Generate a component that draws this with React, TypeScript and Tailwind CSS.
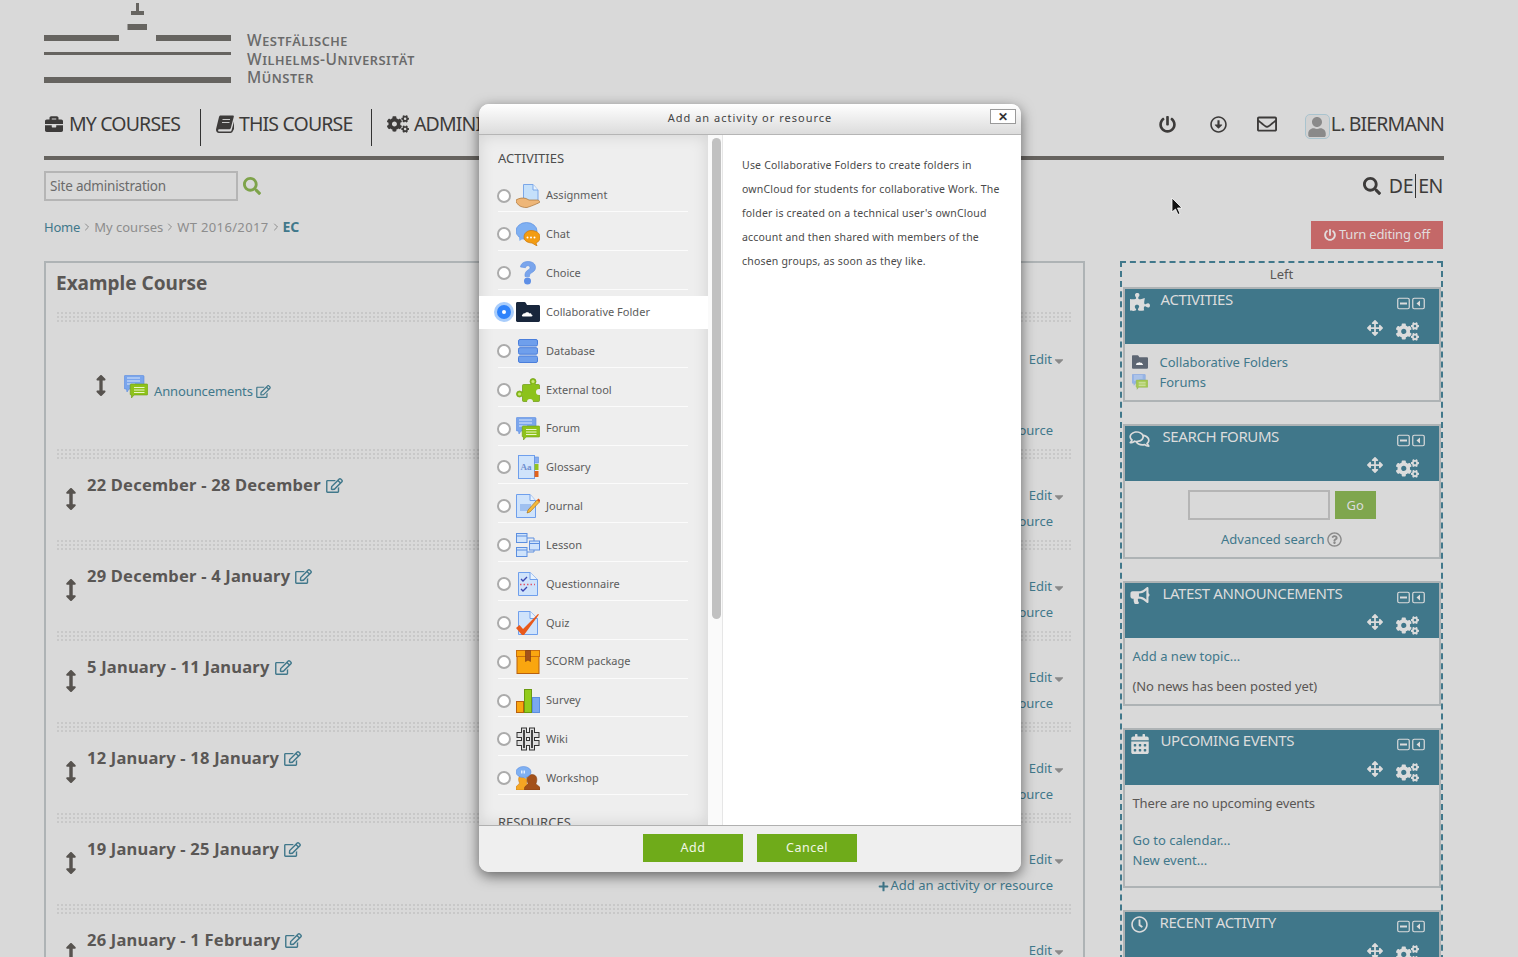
import React from 'react';
import { ChevronRight } from 'lucide-react';
import {
  FaArrowsAlt,
  FaArrowsAltV,
  FaBriefcase,
  FaBullhorn,
  FaCalendarAlt,
  FaCaretDown,
  FaCogs,
  FaPlus,
  FaPowerOff,
  FaPuzzlePiece,
  FaRegArrowAltCircleDown,
  FaRegClock,
  FaRegComments,
  FaRegEdit,
  FaRegEnvelope,
  FaRegQuestionCircle,
  FaSearch,
  FaUser,
} from 'react-icons/fa';

function Logo() {
  return (
    <svg width="187" height="84" viewBox="0 0 187 84" fill="#666460" className="shrink-0">
      <rect x="92" y="3" width="3" height="8" />
      <rect x="87" y="11" width="13" height="4" />
      <rect x="83.5" y="24" width="19.5" height="6" />
      <rect x="0" y="35" width="75" height="6" />
      <rect x="112" y="35" width="75" height="6" />
      <rect x="0" y="52" width="187" height="3" />
      <rect x="0" y="77" width="187" height="6" />
    </svg>
  );
}

function BookIcon() {
  return (
    <svg width="18" height="18" viewBox="0 0 18 18" fill="currentColor">
      <path d="M4.500.5H17c.8 0 1 .6.800 1.300L14.800 13c-.3 1-.9 1.300-1.800 1.300H3.500c-1.800 0-1.800 2.200-.2 2.200h11c.6 0 1-.3 1.200-.9L18 6.500V14l-1.500 2.800c-.3.700-1 1.200-1.800 1.200H3c-2.300 0-3.500-2-2.800-4.500L3 2c.2-.9.700-1.500 1.500-1.500z" />
      <path d="M6.500 4.500h7.500M6 7.500h7.500" stroke="#d9d9d9" strokeWidth=".9" />
    </svg>
  );
}

function CloudFolder({ size = 24, fill = '#18263c' }: { size?: number; fill?: string }) {
  return (
    <svg width={size} height={size} viewBox="0 0 24 24" className="shrink-0">
      <path d="M0 3.500C0 2.700.6 2 1.400 2h7c.6 0 1 .3 1.300.8L11 5h11.600c.8 0 1.400.6 1.400 1.400v14.200c0 .8-.6 1.400-1.400 1.400H1.400C.6 22 0 21.400 0 20.600z" fill={fill} />
      <path d="M7 16.500c-1.400 0-1.600-2 0-2.200.2-1 1.400-1.400 2-.8.6-1.600 3.800-1.600 4.400 0 .8-.5 2 0 2 1 1.700.2 1.400 2-.2 2z" fill="#fff" />
    </svg>
  );
}

function ForumIcon({ size = 24 }: { size?: number }) {
  return (
    <svg width={size} height={size} viewBox="0 0 24 24" className="shrink-0">
      <path d="M1 .5h18c.6 0 1 .4 1 1V14H5l-2 3-.5-3H1c-.4 0-.8-.4-.8-1V1.500C.2 1 .5.500 1 .5z" fill="#7aa5ec" stroke="#5b8be0" strokeWidth=".6" />
      <path d="M3 3h13M3 6h13M3 9h8" stroke="#dbe8fb" strokeWidth="1" />
      <path d="M7 9h16c.4 0 .8.4.8.8v9.400c0 .5-.4.8-.8.8H10l-2.500 3V20H7c-.4 0-.8-.3-.8-.8V9.800c0-.4.400-.8.800-.8z" fill="#8ec21a" stroke="#6e9d12" strokeWidth=".6" />
      <path d="M10 12.500h10.500M10 15h10.500M10 17.500h10.500" stroke="#eaf6c9" strokeWidth="1" />
    </svg>
  );
}

function ActivityIcon({ name }: { name: string }) {
  switch (name) {
    case 'Assignment':
      return (
        <svg width="24" height="24" viewBox="0 0 24 24">
          <path d="M7.500.5H17l5 5.500V19H7.500z" fill="#c5e0fa" stroke="#7ba7e8" />
          <path d="M17 .5V6h5" fill="#eaf4fe" stroke="#7ba7e8" />
          <path d="M0 16c3-2 7-2.500 10-1.500l3 1.500h8.500c2 .5 2.500 1.500 2 2.500-3 1.500-9 4-12.500 5-3 .3-7-1-8.500-2.500L0 18z" fill="#eeb678" stroke="#a97336" strokeWidth=".7" />
        </svg>
      );
    case 'Chat':
      return (
        <svg width="24" height="24" viewBox="0 0 24 24">
          <ellipse cx="10.500" cy="9" rx="10.500" ry="8.500" fill="#7fb0f2" stroke="#5c8fe0" strokeWidth=".7" />
          <path d="M3 15l.5 4L8 16z" fill="#7fb0f2" />
          <path d="M15 8.500c5 0 9 2.500 9 6.500 0 3-1.500 5-4 6l1 3-5-3c-5-.2-8-2.500-8-6 0-4 3.500-6.500 7-6.500z" fill="#f39c12" stroke="#c9770c" strokeWidth=".7" />
          <circle cx="11.500" cy="15.500" r="1" fill="#fff" />
          <circle cx="15" cy="15.500" r="1" fill="#fff" />
          <circle cx="18.500" cy="15.500" r="1" fill="#fff" />
        </svg>
      );
    case 'Choice':
      return (
        <svg width="24" height="24" viewBox="0 0 24 24">
          <path d="M4.500 6C5 2 8.500.500 12 .500c4.500 0 7.500 2.300 7.500 6 0 3-2.200 4.300-4.200 5.500-1.300.8-1.800 1.500-1.800 3.500H9c-.3-3 .5-5 3-6.500 1.300-.8 2-1.300 2-2.300 0-1.400-1-2-2.200-2-1.300 0-2 .8-2.300 2z" fill="#7aa5ec" stroke="#5c8fe0" strokeWidth=".6" />
          <circle cx="11.500" cy="20" r="3.500" fill="#5e8fe6" />
        </svg>
      );
    case 'Collaborative Folder':
      return <CloudFolder />;
    case 'Database':
      return (
        <svg width="24" height="24" viewBox="0 0 24 24">
          <rect x="2.500" y=".5" width="19" height="6.500" rx="1.500" fill="#6f9fec" stroke="#4a7edb" />
          <rect x="2.500" y="8.700" width="19" height="6.500" rx="1.500" fill="#6f9fec" stroke="#4a7edb" />
          <rect x="2.500" y="17" width="19" height="6.500" rx="1.500" fill="#6f9fec" stroke="#4a7edb" />
        </svg>
      );
    case 'External tool':
      return (
        <svg width="24" height="24" viewBox="0 0 24 24">
          <g fill="#8cc21b" stroke="#6b9a10" strokeWidth=".7">
            <circle cx="17" cy="3.500" r="3" />
            <circle cx="3.500" cy="16" r="3" />
            <rect x="6.500" y="6.500" width="17" height="17" rx="1" />
          </g>
          <rect x="15.500" y="5.500" width="3.500" height="3" fill="#8cc21b" />
          <rect x="5.500" y="14.500" width="3" height="3.500" fill="#8cc21b" />
          <circle cx="17" cy="3.500" r="1.500" fill="#c9e67c" />
          <circle cx="3.500" cy="16" r="1.500" fill="#c9e67c" />
          <circle cx="23" cy="14" r="3" fill="#eee" />
          <circle cx="14" cy="24" r="3" fill="#eee" />
        </svg>
      );
    case 'Forum':
      return <ForumIcon />;
    case 'Glossary':
      return (
        <svg width="24" height="24" viewBox="0 0 24 24">
          <rect x="2.500" y=".5" width="16" height="23" fill="#cfe3fb" stroke="#6f9fec" />
          <rect x="18.500" y="2" width="4" height="6" fill="#88aef0" stroke="#5c8fe0" strokeWidth=".6" />
          <rect x="18.500" y="9" width="4" height="6" fill="#93c31d" />
          <rect x="18.500" y="16" width="4" height="6" fill="#e1621d" />
          <text x="4.500" y="15" fontSize="9" fontWeight="700" fontFamily="'Liberation Serif',serif" fill="#6f8fcf">Aa</text>
        </svg>
      );
    case 'Journal':
      return (
        <svg width="24" height="24" viewBox="0 0 24 24">
          <path d="M.5.5H14l5.500 6v17H.5z" fill="#cfe3fb" stroke="#6f9fec" />
          <path d="M14 .5v6h5.500" fill="#e8f2fd" stroke="#6f9fec" />
          <rect x="4" y="10" width="11" height="7" fill="#9fc0f0" />
          <path d="M12 16l9-10 2.500 2-9.500 10-3 1z" fill="#f5b93c" stroke="#a06a10" strokeWidth=".6" />
          <path d="M21 6l1.500-1.500 2 2-1 1.500z" fill="#e25d1b" />
        </svg>
      );
    case 'Lesson':
      return (
        <svg width="24" height="24" viewBox="0 0 24 24" fill="#cfe3fb" stroke="#5c8fe0">
          <rect x=".5" y=".5" width="10.500" height="9" />
          <rect x=".5" y="14.500" width="10.500" height="9" />
          <rect x="13.500" y="8" width="10" height="9" />
          <path d="M.5 3h10.500M.5 17h10.500M13.500 10.500h10" fill="none" />
          <path d="M11 5h7v3M11 19h7v-2" fill="none" />
        </svg>
      );
    case 'Questionnaire':
      return (
        <svg width="24" height="24" viewBox="0 0 24 24">
          <path d="M2.500.5H14l7.500 7v16h-19z" fill="#cfe3fb" stroke="#6f9fec" />
          <path d="M14 .5v7h7.500" fill="#e8f2fd" stroke="#6f9fec" />
          <path d="M5 7l2 2 4-4M5 17l2 2 4-4" fill="none" stroke="#3b46b0" strokeWidth="1.300" />
          <path d="M4 12.500h15" stroke="#e2566b" strokeWidth="1.300" strokeDasharray="1.500 2" />
        </svg>
      );
    case 'Quiz':
      return (
        <svg width="24" height="24" viewBox="0 0 24 24">
          <path d="M2.500.5H14l7.500 7v16h-19z" fill="#cfe3fb" stroke="#6f9fec" />
          <path d="M14 .5v7h7.500" fill="#e8f2fd" stroke="#6f9fec" />
          <path d="M0 17l3.500-3 3.500 4L22 3l1 .5L8 24H6z" fill="#e8591b" />
        </svg>
      );
    case 'SCORM package':
      return (
        <svg width="24" height="24" viewBox="0 0 24 24">
          <rect x="1" y="6" width="22" height="17.500" fill="#faa60f" stroke="#b8600f" />
          <rect x=".5" y=".5" width="23" height="6" fill="#faa60f" stroke="#c96f0f" />
          <path d="M9.500.5h5v11l-2.500-1.500-2.500 1.500z" fill="#a3511a" stroke="#7a3b10" strokeWidth=".6" />
        </svg>
      );
    case 'Survey':
      return (
        <svg width="24" height="24" viewBox="0 0 24 24">
          <rect x=".5" y="12.500" width="7" height="11" fill="#faa60f" stroke="#b8600f" />
          <rect x="8.500" y=".5" width="7" height="23" fill="#92cc1b" stroke="#6b9a10" />
          <rect x="16.500" y="8.500" width="7" height="15" fill="#7aa8f0" stroke="#5c8fe0" />
        </svg>
      );
    case 'Wiki':
      return (
        <svg width="24" height="24" viewBox="0 0 24 24" fill="none">
          <path d="M8 .5v23M16 .5v23M.5 8h23M.5 16h23" stroke="#333" strokeWidth="6" />
          <path d="M8 1.500v21M16 1.500v21M1.500 8h21M1.500 16h21" stroke="#dedede" strokeWidth="4" />
          <path d="M8 3v18M16 3v18" stroke="#444" strokeWidth="2" />
        </svg>
      );
    case 'Workshop':
      return (
        <svg width="24" height="24" viewBox="0 0 24 24">
          <path d="M0 24v-2.500c0-2 3-2.500 3.500-4.500C2 14 2 9 7 9s5 5 3.500 8c.5 2 3.500 2.500 3.500 4.500V24z" fill="#f5a623" stroke="#c0700f" strokeWidth=".5" />
          <path d="M8.500 24v-2c0-2 3-2.500 3.500-4.500-1.500-3-1.500-9 4-9s5.500 6 4 9c.5 2 4 2.500 4 4.500v2z" fill="#a3511a" stroke="#7a3b10" strokeWidth=".5" />
          <ellipse cx="7.500" cy="6" rx="7.500" ry="5.500" fill="#7fb0f2" stroke="#5c8fe0" strokeWidth=".6" />
          <path d="M7.500 11l3 2.500-.5-3z" fill="#7fb0f2" />
          <path d="M5.500 4.500v3M7 4.500v3M8.500 4.500v3" stroke="#fff" strokeWidth=".8" />
        </svg>
      );
    default:
      return null;
  }
}

const activities = [
  'Assignment',
  'Chat',
  'Choice',
  'Collaborative Folder',
  'Database',
  'External tool',
  'Forum',
  'Glossary',
  'Journal',
  'Lesson',
  'Questionnaire',
  'Quiz',
  'SCORM package',
  'Survey',
  'Wiki',
  'Workshop',
];

function ActivityRow({ name }: { name: string }) {
  const selected = name === 'Collaborative Folder';
  return (
    <div className="h-[38.85px] pt-[6px]">
      <div className={`h-full pl-[19px] ${selected ? 'bg-white' : ''}`}>
        <div className={`flex h-full w-[190px] items-center border-b ${selected ? 'border-white' : 'border-[#fbfbfb]'}`}>
          {selected ? (
            <span className="-ml-px flex h-[14px] w-[14px] shrink-0 items-center justify-center rounded-full bg-[#2f83fb] shadow-[0_0_0_3px_#a9cdfb]">
              <span className="h-[4px] w-[4px] rounded-full bg-white" />
            </span>
          ) : (
            <span className="-ml-px h-[14px] w-[14px] shrink-0 rounded-full border-2 border-[#ababab] bg-white" />
          )}
          <span className="ml-[5px] flex w-[24px] shrink-0 items-center">
            <ActivityIcon name={name} />
          </span>
          <span className="ml-[6px] text-[11px] tracking-[0.02px] text-[#5c5c5c]">{name}</span>
        </div>
      </div>
    </div>
  );
}

function Modal() {
  return (
    <div className="absolute left-[479px] top-[104px] flex h-[768px] w-[542px] flex-col overflow-hidden rounded-[10px] bg-white shadow-[0_4px_14px_rgba(0,0,0,0.55)]">
      <div className="relative flex h-[31px] shrink-0 items-center justify-center border-b border-[#b5b5b5] bg-gradient-to-b from-white to-[#dcdcdc] pb-[2px] text-[11px] tracking-[1px] text-[#444]">
        Add an activity or resource
        <span className="absolute right-[5px] top-[5px] flex h-[15px] w-[26px] items-center justify-center border border-[#9a9a9a] bg-white text-[12px] font-bold leading-none text-[#333]">
          ✕
        </span>
      </div>
      <div className="flex min-h-0 flex-1">
        <div className="w-[229px] shrink-0 overflow-hidden bg-[#eeeeee] shadow-[inset_0_0_16px_rgba(0,0,0,0.12)]">
          <div className="pl-[19px] pt-[14px] text-[13px] leading-[18px] text-[#4d4d4d]">ACTIVITIES</div>
          <div className="mt-[6.650px]">
            {activities.map((a) => (
              <ActivityRow key={a} name={a} />
            ))}
          </div>
          <div className="pl-[19px] pt-[18px] text-[13px] leading-[18px] text-[#4d4d4d]">RESOURCES</div>
        </div>
        <div className="w-[15px] shrink-0 border-r border-[#e6e6e6] bg-[#fafafa] pl-[4px] pt-[3px]">
          <div className="h-[481px] w-[9px] rounded-[5px] bg-[#c1c1c1]" />
        </div>
        <div className="flex-1 pl-[19px] pt-[18px] text-[10.500px] leading-[24px] tracking-[0.2px] text-[#4a4a4a]">
          Use Collaborative Folders to create folders in
          <br />
          ownCloud for students for collaborative Work. The
          <br />
          folder is created on a technical user's ownCloud
          <br />
          account and then shared with members of the
          <br />
          chosen groups, as soon as they like.
        </div>
      </div>
      <div className="flex h-[47px] shrink-0 items-start justify-center gap-[14px] border-t border-[#b0b0b0] bg-[#efefef] pt-[8px]">
        <button className="h-[28px] w-[100px] bg-[#6fab1a] text-[12.500px] tracking-[0.5px] text-[#f2f7e6]">Add</button>
        <button className="h-[28px] w-[100px] bg-[#6fab1a] text-[12.500px] tracking-[0.5px] text-[#f2f7e6]">Cancel</button>
      </div>
    </div>
  );
}

function Stripe() {
  return (
    <div className="h-[10px] bg-[radial-gradient(circle,#c8c8c8_1.2px,transparent_1.4px)] bg-[length:4px_4px] bg-[position:0_-1px]" />
  );
}

function EditLink() {
  return (
    <span className="mr-[-11px]">
      Edit
      <FaCaretDown className="ml-[2px] inline h-[14px] w-[10px] text-[#8a8a8a]" />
    </span>
  );
}

function AddLink() {
  return (
    <div className="whitespace-nowrap">
      <FaPlus className="mr-[2px] inline h-[11px] w-[11px]" />
      Add an activity or resource
    </div>
  );
}

function SectionRow({ title }: { title: string }) {
  return (
    <div className="h-[91px]">
      <Stripe />
      <div className="flex h-[81px]">
        <div className="w-[31px] shrink-0 pl-[8px] pt-[29px] text-[#57534f]">
          <FaArrowsAltV className="h-[22px] w-[14px]" />
        </div>
        <div className="flex-1 pt-[14px]">
          <div className="flex items-center gap-[5px] text-[16.500px] font-bold leading-[24px] tracking-[0.22px] text-[#5a5755]">
            {title}
            <FaRegEdit className="h-[15px] w-[17px] text-[#41788b]" />
          </div>
        </div>
        <div className="w-[200px] pr-[20px] pt-[26px] text-right text-[13px] leading-[20px] text-[#41788b]">
          <div>
            <EditLink />
          </div>
          <div className="mt-[6px]">
            <AddLink />
          </div>
        </div>
      </div>
    </div>
  );
}

function CourseBox() {
  return (
    <div className="h-[720px] w-[1041px] shrink-0 border-2 border-b-0 border-[#aeb3b5] px-[10px]">
      <h2 className="pt-[6px] text-[19px] font-bold leading-[28px] text-[#5a5755]">Example Course</h2>
      <div className="mt-[15px] h-[137px]">
        <Stripe />
        <div className="flex h-[127px]">
          <div className="h-full w-[68px] shrink-0 pl-[38px] pt-[53px] text-[#57534f]">
            <FaArrowsAltV className="h-[21px] w-[14px]" />
          </div>
          <div className="flex flex-1 items-start pt-[53px]">
            <ForumIcon />
            <span className="ml-[6px] mt-[6px] flex items-center gap-[3px] text-[13px] leading-[20px] tracking-[-0.12px] text-[#41788b]">
              Announcements
              <FaRegEdit className="h-[13px] w-[15px]" />
            </span>
          </div>
          <div className="w-[200px] pr-[20px] pt-[27px] text-right text-[13px] leading-[20px] text-[#41788b]">
            <div>
              <EditLink />
            </div>
            <div className="mt-[51px]">
              <AddLink />
            </div>
          </div>
        </div>
      </div>
      <SectionRow title="22 December - 28 December" />
      <SectionRow title="29 December - 4 January" />
      <SectionRow title="5 January - 11 January" />
      <SectionRow title="12 January - 18 January" />
      <SectionRow title="19 January - 25 January" />
      <SectionRow title="26 January - 1 February" />
    </div>
  );
}

function BlockControls() {
  return (
    <div className="flex gap-[2px]">
      <svg width="13" height="13" viewBox="0 0 13 13" fill="none">
        <rect x=".75" y="1.250" width="11.500" height="10.500" rx="1.500" stroke="currentColor" strokeWidth="1.200" />
        <path d="M3 6.500h7" stroke="currentColor" strokeWidth="2" />
      </svg>
      <svg width="13" height="13" viewBox="0 0 13 13" fill="none">
        <rect x=".75" y="1.250" width="11.500" height="10.500" rx="1.500" stroke="currentColor" strokeWidth="1.200" />
        <path d="M8 3.500v6l-3.500-3z" fill="currentColor" />
      </svg>
    </div>
  );
}

interface BlockProps {
  icon: React.ReactNode;
  title: string;
  height: string;
  titleIndent: string;
  children?: React.ReactNode;
}

function Block({ icon, title, height, titleIndent, children }: BlockProps) {
  return (
    <div className={`mb-[22px] ml-[0.500px] border-2 border-[#aeb3b5] ${height}`}>
      <div className="flex h-[55px] bg-[#40778a] pl-[4px] pr-[14px] text-[#dcdcdc]">
        <div className="flex flex-1 items-start">
          <span className="flex w-[22px] justify-center pt-[4px]">{icon}</span>
          <span className={`-mt-[2px] whitespace-nowrap text-[15px] uppercase leading-[24px] tracking-[-0.4px] ${titleIndent}`}>{title}</span>
        </div>
        <div className="flex w-[66px] flex-col items-end pt-[8px]">
          <BlockControls />
          <div className="mt-[10px] flex items-start gap-[13px] pr-[6px]">
            <FaArrowsAlt className="h-[16px] w-[16px]" />
            <FaCogs className="mt-[2px] h-[19px] w-[23px]" />
          </div>
        </div>
      </div>
      {children}
    </div>
  );
}

function Sidebar() {
  return (
    <div className="mr-px h-[720px] w-[323px] shrink-0 border-x-2 border-t-2 border-dashed border-[#41788b] text-[13px] leading-[20px]">
      <div className="h-[24px] pt-[1px] text-center text-[#5a5755]">Left</div>
      <Block icon={<FaPuzzlePiece className="h-[18px] w-[20px]" />} title="Activities" height="h-[115px]" titleIndent="ml-[10px]">
        <div className="px-[7px] pt-[8px] text-[#41788b]">
          <div className="flex items-center gap-[12px]">
            <span className="opacity-80">
              <CloudFolder size={16} fill="#3f4a5a" />
            </span>
            Collaborative Folders
          </div>
          <div className="flex items-center gap-[12px]">
            <span className="opacity-70">
              <ForumIcon size={16} />
            </span>
            Forums
          </div>
        </div>
      </Block>
      <Block icon={<FaRegComments className="h-[18px] w-[21px]" />} title="Search forums" height="h-[135px]" titleIndent="ml-[12px]">
        <div className="flex flex-col items-center pt-[9px]">
          <div className="flex items-center gap-[5px]">
            <div className="h-[30px] w-[142px] border-2 border-[#b5b5b5]" />
            <div className="flex h-[28px] w-[41px] items-center justify-center bg-[#7fa64d] text-[#dcdcdc]">Go</div>
          </div>
          <div className="mt-[9px] flex items-center gap-[3px] text-[#41788b]">
            Advanced search
            <FaRegQuestionCircle className="h-[15px] w-[15px] text-[#8a8a8a]" />
          </div>
        </div>
      </Block>
      <Block icon={<FaBullhorn className="h-[17px] w-[20px]" />} title="Latest announcements" height="h-[125px]" titleIndent="ml-[12px]">
        <div className="px-[8px] pt-[8px]">
          <div className="text-[#41788b]">Add a new topic...</div>
          <div className="mt-[10px] tracking-[-0.08px] text-[#5a5755]">(No news has been posted yet)</div>
        </div>
      </Block>
      <Block icon={<FaCalendarAlt className="h-[20px] w-[18px]" />} title="Upcoming events" height="h-[160px]" titleIndent="ml-[10px]">
        <div className="px-[8px] pt-[8px]">
          <div className="tracking-[-0.12px] text-[#5a5755]">There are no upcoming events</div>
          <div className="mt-[17px] text-[#41788b]">Go to calendar...</div>
          <div className="text-[#41788b]">New event...</div>
        </div>
      </Block>
      <Block icon={<FaRegClock className="h-[17px] w-[17px]" />} title="Recent activity" height="h-[115px]" titleIndent="ml-[9px]" />
    </div>
  );
}

function Cursor() {
  return (
    <svg className="absolute left-[1171px] top-[197px]" width="12" height="19" viewBox="0 0 12 19">
      <path d="M1 1v14l3.500-3 2.500 5.500 2-1L6.500 11H11z" fill="#111" stroke="#fff" strokeWidth=".8" />
    </svg>
  );
}

export default function App() {
  return (
    <div className="relative h-[957px] overflow-hidden bg-[#d9d9d9] pl-[44px] [font-family:'Noto_Sans',sans-serif]">
      <div className="w-[1400px]">
        <div className="flex h-[109px] items-start">
          <Logo />
          <div className="ml-[16px] mt-[31px] text-[15.500px] font-medium leading-[18.500px] tracking-[0.55px] text-[#6a6a6a] [font-variant:small-caps]">
            <div>Westfälische</div>
            <div>Wilhelms-Universität</div>
            <div>Münster</div>
          </div>
        </div>
        <div className="flex h-[51px] justify-between border-b-4 border-[#66635f] text-[19.500px] tracking-[-0.85px] text-[#3d3b3a]">
          <div className="flex h-[37px]">
            <div className="flex w-[157px] items-center gap-[5px] border-r border-[#333] pb-[7px]">
              <FaBriefcase className="h-[18px] w-[20px]" /> MY COURSES
            </div>
            <div className="flex w-[171px] items-center gap-[5px] border-r border-[#333] pb-[7px] pl-[15px]">
              <BookIcon /> THIS COURSE
            </div>
            <div className="flex items-center gap-[5px] pb-[7px] pl-[15px]">
              <FaCogs className="h-[20px] w-[22px]" /> ADMINISTRATION
            </div>
          </div>
          <div className="flex h-[30px] items-center">
            <FaPowerOff className="h-[17px] w-[17px]" />
            <FaRegArrowAltCircleDown className="ml-[34px] h-[17px] w-[17px]" />
            <FaRegEnvelope className="ml-[30px] h-[20px] w-[20px]" />
            <span className="ml-[28px] mt-[5px] flex h-[25px] w-[25px] items-center justify-center rounded-[5px] border border-[#a9c4cf] bg-[#d2d2d2]">
              <FaUser className="h-[20px] w-[20px] text-[#8a8a8a]" />
            </span>
            <span className="ml-px">L. BIERMANN</span>
          </div>
        </div>
        <div className="flex h-[101px] justify-between">
          <div className="pt-[11px]">
            <div className="flex items-center">
              <div className="flex h-[30px] w-[194px] items-center border-2 border-[#b5b5b5] pl-[4px] text-[13.500px] tracking-[-0.2px] text-[#6b6b6b]">
                Site administration
              </div>
              <FaSearch className="ml-[5px] h-[18px] w-[18px] text-[#7ea34a]" />
            </div>
            <div className="mt-[16px] flex items-center gap-[4px] text-[13px] leading-[20px] text-[#8d8d8d]">
              <span className="tracking-[-0.2px] text-[#41788b]">Home</span>
              <ChevronRight className="mx-[-3px] h-[12px] w-[12px]" />
              <span>My courses</span>
              <ChevronRight className="mx-[-3px] h-[12px] w-[12px]" />
              <span className="tracking-[0.35px]">WT 2016/2017</span>
              <ChevronRight className="mx-[-3px] h-[12px] w-[12px]" />
              <span className="text-[14px] font-bold text-[#41788b]">EC</span>
            </div>
          </div>
          <div className="flex flex-col items-end pr-px pt-[12px]">
            <div className="flex h-[28px] items-center text-[19.500px] tracking-[-0.4px] text-[#3d3b3a]">
              <FaSearch className="mr-[8px] h-[18px] w-[18px]" />
              DE
              <span className="mx-[2px] h-[24px] border-l border-[#333]" />
              EN
            </div>
            <div className="mt-[21px] flex h-[28px] w-[132px] items-center justify-center gap-[3px] bg-[#c46868] text-[13px] tracking-[-0.2px] text-[#e2dcdc]">
              <FaPowerOff className="h-[12px] w-[12px]" /> Turn editing off
            </div>
          </div>
        </div>
        <div className="flex justify-between">
          <CourseBox />
          <Sidebar />
        </div>
      </div>
      <Cursor />
      <Modal />
    </div>
  );
}
